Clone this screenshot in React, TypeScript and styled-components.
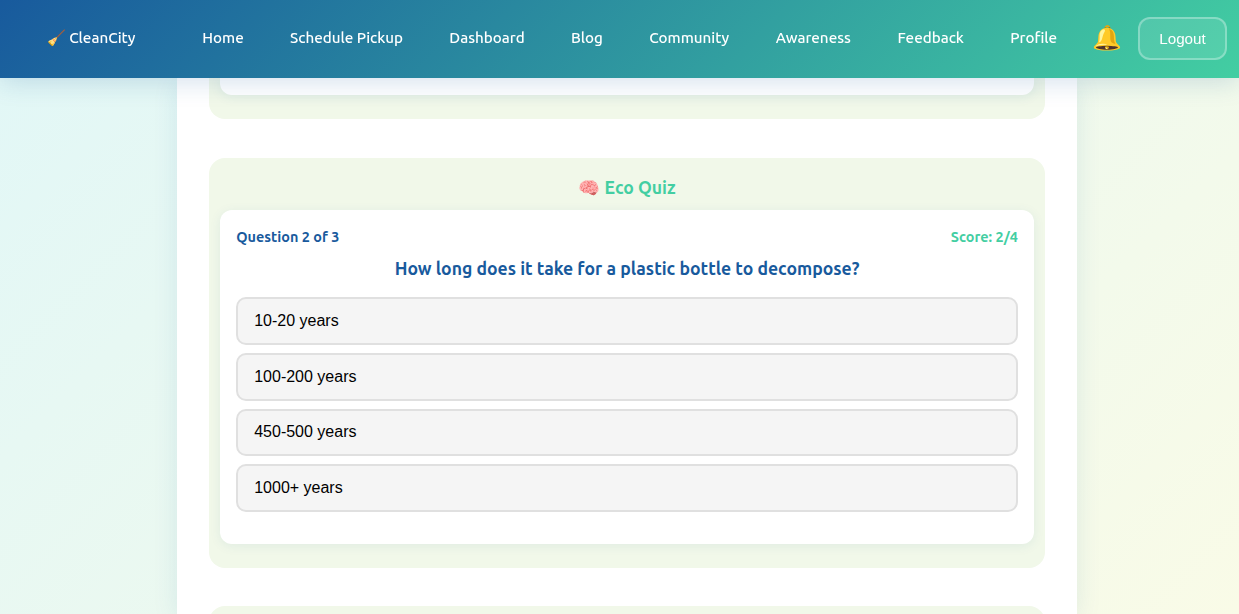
import React from "react";
import styled, { createGlobalStyle } from "styled-components";

const GlobalStyle = createGlobalStyle`
  * { box-sizing: border-box; }
  body { margin: 0; overflow: hidden; }
`;

const uiFont = `Ubuntu, "Noto Sans", "Open Sans", sans-serif`;

const Page = styled.div`
  height: 614px;
  display: flex;
  flex-direction: column;
  overflow: hidden;
  font-family: ${uiFont};
  background: linear-gradient(135deg, #e1f7f7 0%, #f9fbe7 100%);
`;

const Header = styled.header`
  position: relative;
  z-index: 2;
  will-change: transform;
  flex: none;
  height: 78px;
  padding: 0 12px 0 46.6px;
  display: flex;
  align-items: center;
  color: #fff;
  background: linear-gradient(135deg, #185a9d 0%, #43cea2 100%);
  box-shadow: 0 4px 24px rgba(24, 90, 157, 0.18);
`;

const Brand = styled.a`
  width: 90px;
  margin-right: 65.4px;
  font-size: 15.2px;
  font-weight: 500;
  line-height: 20px;
  white-space: nowrap;
  margin-top: -3px;
`;

const Nav = styled.nav`
  display: flex;
  gap: 46px;
  margin-top: -3px;
`;

const NavLink = styled.a<{ $width: number }>`
  width: ${(p) => p.$width}px;
  display: flex;
  justify-content: center;
  font-size: 15.2px;
  font-weight: 500;
  line-height: 20px;
  white-space: nowrap;
`;

const Bell = styled.span`
  width: 30px;
  margin-left: 35px;
  margin-top: -2px;
  font-size: 24px;
  line-height: 32px;
  text-align: center;
`;

const Logout = styled.button`
  width: 89px;
  height: 43px;
  margin-left: auto;
  margin-top: -2px;
  padding: 0;
  border: 2px solid rgba(255, 255, 255, 0.3);
  border-radius: 12px;
  background: rgba(255, 255, 255, 0.1);
  color: #fff;
  font: 15.2px "Liberation Sans", Arial, sans-serif;
`;

const Panel = styled.main`
  width: 900px;
  height: 536px;
  flex: none;
  margin-left: 177px;
  padding: 0 32px;
  display: flex;
  flex-direction: column;
  background: #fff;
  box-shadow: 0 4px 24px rgba(24, 90, 157, 0.1);
`;

const Section = styled.section<{ $edge?: "top" | "bottom" }>`
  flex: none;
  padding: ${(p) => (p.$edge === "top" ? "0 11.2px 24px" : "16px 11.2px 24px")};
  border-radius: ${(p) => (p.$edge === "top" ? "0 0 16px 16px" : "16px")};
  background: #f1f8e9;
  margin-bottom: ${(p) => (p.$edge === "top" ? 39 : 38)}px;
`;

const CardTail = styled.div`
  height: 17px;
  border-radius: 0 0 12px 12px;
  background: #fff;
  box-shadow: 0 2px 12px rgba(24, 90, 157, 0.08);
`;

const SectionTitle = styled.h2`
  height: 36px;
  margin: 0;
  text-align: center;
  color: #43cea2;
  font-size: 17.6px;
  font-weight: 600;
  line-height: 27px;
`;

const Card = styled.div`
  height: 334px;
  padding: 16px;
  border-radius: 12px;
  background: #fff;
  box-shadow: 0 2px 12px rgba(24, 90, 157, 0.08);
`;

const Status = styled.div`
  display: flex;
  justify-content: space-between;
  height: 22px;
  font-size: 14.4px;
  font-weight: 600;
  line-height: 22px;
  color: #185a9d;
`;

const Score = styled.span`
  color: #43cea2;
`;

const Question = styled.h3`
  height: 49px;
  margin: 0;
  padding-top: 8px;
  text-align: center;
  color: #185a9d;
  font-size: 17.6px;
  font-weight: 600;
  line-height: 26px;
`;

const Options = styled.div`
  display: flex;
  flex-direction: column;
  gap: 8px;
  padding-top: 0.4px;
`;

const Option = styled.button`
  height: 47.6px;
  padding: 0 16px;
  border: 2px solid #e0e0e0;
  border-radius: 10px;
  background: #f5f5f5;
  color: #000;
  font: 16px "Liberation Sans", Arial, sans-serif;
  text-align: left;
`;

const links: [string, number][] = [
  ["Home", 42],
  ["Schedule Pickup", 113],
  ["Dashboard", 76],
  ["Blog", 32],
  ["Community", 80.4],
  ["Awareness", 75.8],
  ["Feedback", 67],
  ["Profile", 47],
];

const answers = ["10-20 years", "100-200 years", "450-500 years", "1000+ years"];

export default function App() {
  return (
    <Page>
      <GlobalStyle />
      <Header>
        <Brand>🧹 CleanCity</Brand>
        <Nav>
          {links.map(([label, width]) => (
            <NavLink key={label} $width={width}>{label}</NavLink>
          ))}
        </Nav>
        <Bell>🔔</Bell>
        <Logout>Logout</Logout>
      </Header>
      <Panel>
        <Section $edge="top"><CardTail /></Section>
        <Section>
          <SectionTitle>🧠 Eco Quiz</SectionTitle>
          <Card>
            <Status><span>Question 2 of 3</span><Score>Score: 2/4</Score></Status>
            <Question>How long does it take for a plastic bottle to decompose?</Question>
            <Options>
              {answers.map((a) => <Option key={a}>{a}</Option>)}
            </Options>
          </Card>
        </Section>
        <Section $edge="bottom" />
      </Panel>
    </Page>
  );
}
